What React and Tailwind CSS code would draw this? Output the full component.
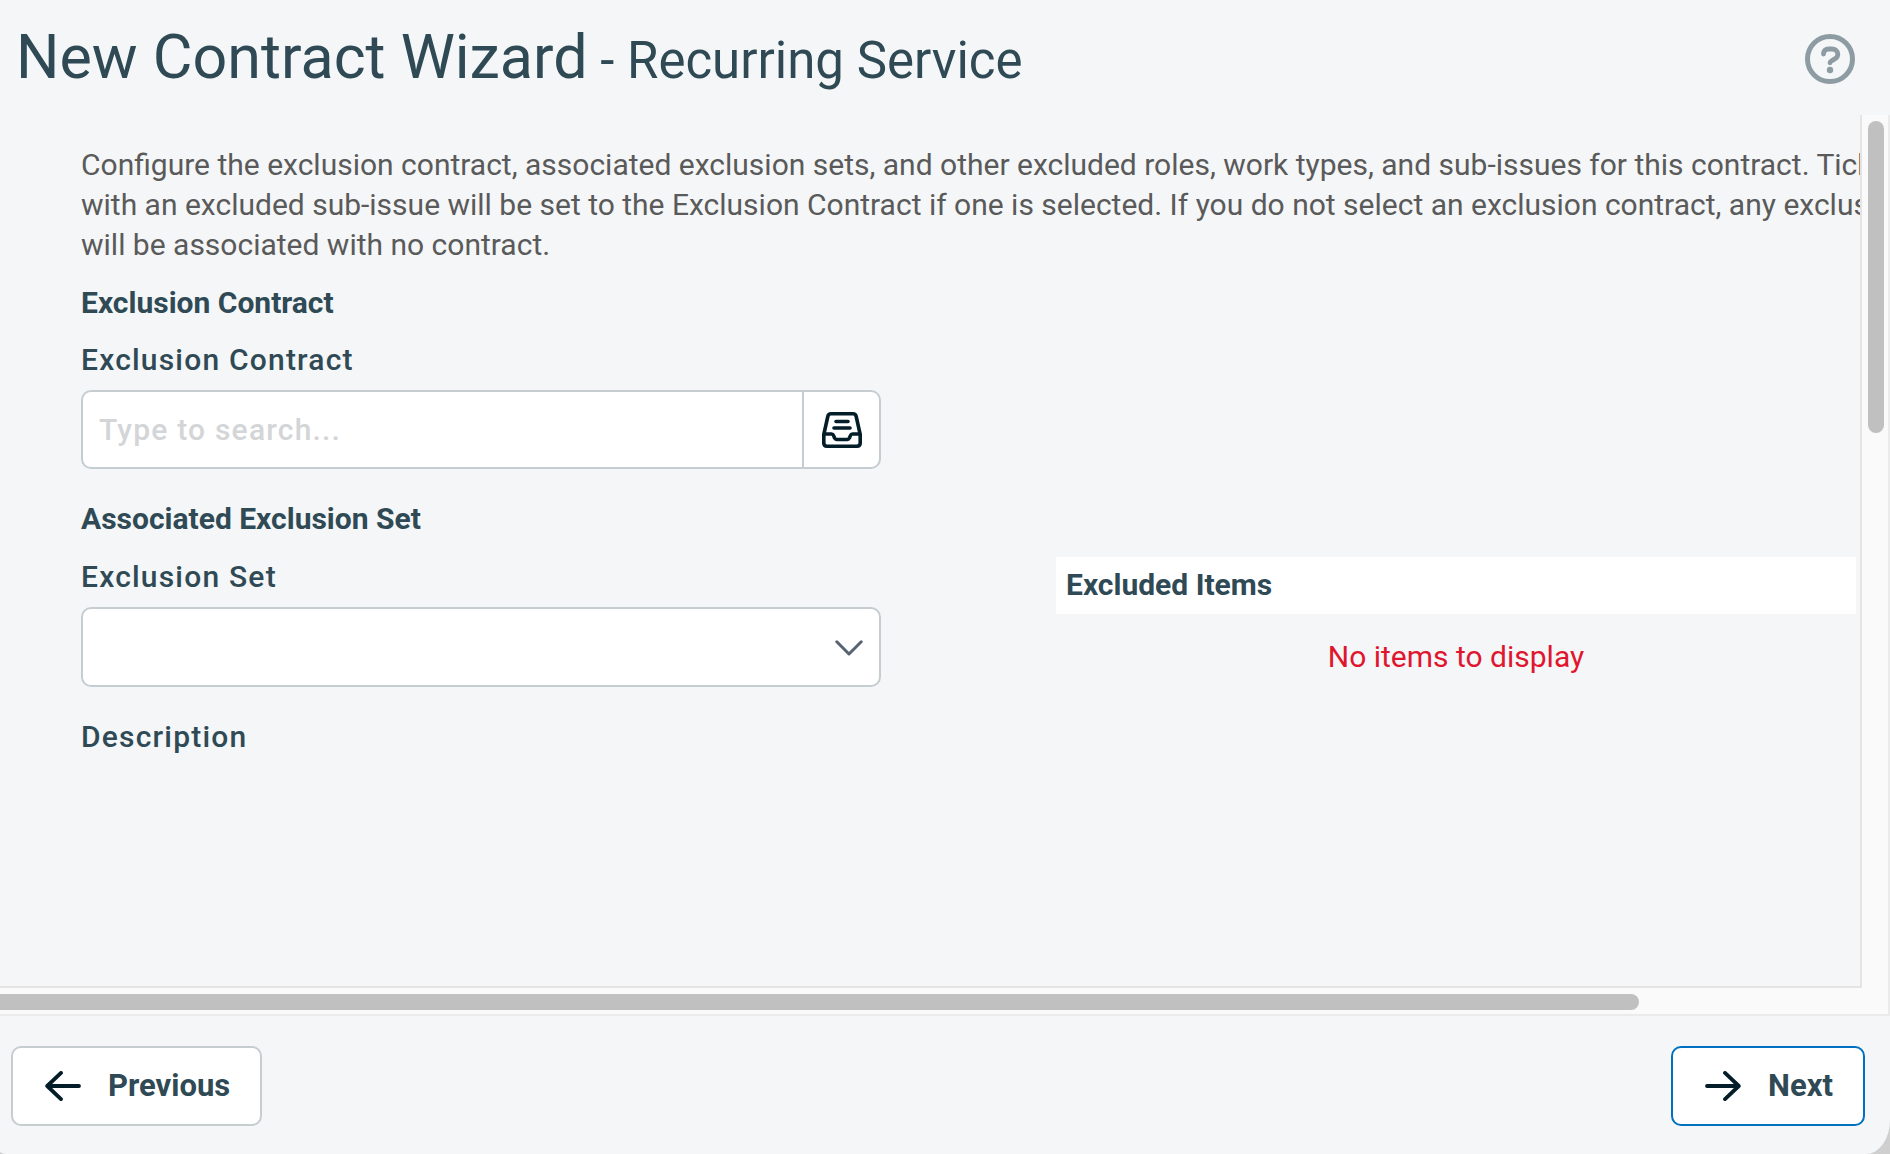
import { useState } from 'react'

function HelpIcon() {
  return (
    <svg width="50" height="50" viewBox="0 0 50 50" fill="none" stroke="currentColor" aria-hidden="true">
      <circle cx="25" cy="25" r="22.5" strokeWidth="5" />
      <path d="M18.500 20c0-3.200 2-5 5-5h3.500c3 0 5.800 1.900 5.800 5.200 0 2.300-1.200 3.700-3 4.700l-2.800 1.700c-1.400.800-2 1.600-2 2.200" strokeWidth="4.800" strokeLinecap="round" strokeLinejoin="round" />
      <circle cx="25" cy="36" r="3.200" fill="currentColor" stroke="none" />
    </svg>
  )
}

function InboxIcon() {
  return (
    <svg width="40" height="36" viewBox="0 0 40 36" fill="none" stroke="currentColor" strokeWidth="3.600" strokeLinecap="round" strokeLinejoin="round" aria-hidden="true">
      <path d="M1.800 22.500 5.800 4.500Q6.400 1.800 9 1.800h22q2.600 0 3.200 2.700l4 18V31q0 3.200-3.200 3.200H5Q1.800 34.200 1.800 31Z" />
      <path d="M2.500 22H9.500Q11 22 11.500 23.400L12.700 26.200Q13.200 27.500 14.700 27.500H25.300Q26.800 27.500 27.300 26.200L28.500 23.400Q29 22 30.500 22H37.500" />
      <path d="M14 9.500H26M12 16H28" />
    </svg>
  )
}

function ChevronIcon() {
  return (
    <svg width="28" height="16" viewBox="0 0 28 16" fill="none" stroke="currentColor" strokeWidth="3" strokeLinecap="round" strokeLinejoin="round" aria-hidden="true">
      <path d="M1.800 1.800 14 14 26.200 1.800" />
    </svg>
  )
}

function ArrowIcon({ className }) {
  return (
    <svg className={className} width="36" height="30" viewBox="0 0 36 30" fill="none" stroke="currentColor" strokeWidth="3.800" strokeLinecap="round" strokeLinejoin="round" aria-hidden="true">
      <path d="M16 1.900 2.200 15 16 28.100M2.200 15H34" />
    </svg>
  )
}

function SectionTitle({ children, className = '' }) {
  return <h2 className={`text-[30px] leading-[40px] font-bold ${className}`}>{children}</h2>
}

const LABEL = 'block text-[30px] leading-[40px] font-medium tracking-[0.04em]'
const BUTTON = 'flex h-20 items-center gap-[27px] rounded-[10px] border-2 bg-white pr-[30px] pl-8 text-[31px] leading-[40px] font-bold'

export default function App() {
  const [contract, setContract] = useState('')
  const [exclusionSet, setExclusionSet] = useState('')

  return (
    <div className="h-screen bg-[#cfcfcf] font-['Roboto',sans-serif] text-[#2f4a55]">
      <div className="flex h-full flex-col overflow-hidden rounded-br-[24px_34px] rounded-bl-[6px_3px] bg-[#f4f6f8]">
        <header className="flex h-[115px] shrink-0 items-center justify-between pt-[2px] pr-[35px] pl-4">
          <h1 className="text-[61px] leading-[72px]">
            New Contract Wizard<span className="text-[51px]"> - Recurring Service</span>
          </h1>
          <button type="button" aria-label="Help" className="text-[#8d9ca3]">
            <HelpIcon />
          </button>
        </header>

        {/* Scrolling area */}
        <div className="flex min-h-0 flex-1 flex-col">
          <div className="flex min-h-0 flex-1">
            <main className="min-w-0 flex-1 overflow-hidden border-r-2 border-b-2 border-[#e4e4e4] pt-[30px] pl-[81px]">
              <div className="w-max">
                <p className="text-[30px] leading-[40px] whitespace-nowrap text-[#5a5a5a]">
                  Configure the exclusion contract, associated exclusion sets, and other excluded roles, work types, and sub-issues for this contract. Tickets
                  <br />
                  with an excluded sub-issue will be set to the Exclusion Contract if one is selected. If you do not select an exclusion contract, any exclusions
                  <br />
                  will be associated with no contract.
                </p>

                <SectionTitle className="mt-[18px]">Exclusion Contract</SectionTitle>
                <div className="mt-[17px] w-[800px]">
                  <label htmlFor="contract" className={LABEL}>Exclusion Contract</label>
                  <div className="mt-[10px] flex h-[79px] overflow-hidden rounded-[10px] border-2 border-[#c5cdd1] bg-white">
                    <input
                      id="contract"
                      type="text"
                      placeholder="Type to search..."
                      value={contract}
                      onChange={e => setContract(e.target.value)}
                      className="min-w-0 flex-1 px-4 text-[30px] font-medium tracking-[0.04em] outline-none placeholder:text-[#d3d5d7]"
                    />
                    <button type="button" aria-label="Browse contracts" className="flex w-[77px] items-center justify-center border-l-2 border-[#c5cdd1] text-[#031d29]">
                      <InboxIcon />
                    </button>
                  </div>
                </div>

                <SectionTitle className="mt-[30px]">Associated Exclusion Set</SectionTitle>
                <div className="mt-[18px] flex gap-[175px]">
                  <div className="w-[800px]">
                    <label htmlFor="exclusion-set" className={LABEL}>Exclusion Set</label>
                    <div className="relative mt-[10px]">
                      <select
                        id="exclusion-set"
                        value={exclusionSet}
                        onChange={e => setExclusionSet(e.target.value)}
                        className="block h-20 w-full appearance-none rounded-[10px] border-2 border-[#c5cdd1] bg-white px-4 text-[30px] outline-none"
                      >
                        <option value=""></option>
                      </select>
                      <span className="pointer-events-none absolute inset-y-0 right-[18px] flex items-center pt-[2px] text-[#566370]">
                        <ChevronIcon />
                      </span>
                    </div>
                    <h3 className={`mt-[30px] ${LABEL}`}>Description</h3>
                  </div>

                  <section className="w-[800px]">
                    <SectionTitle className="bg-white px-[10px] pt-2 pb-[9px]">Excluded Items</SectionTitle>
                    <p className="mt-[23px] text-center text-[30px] leading-[40px] text-[#e0162f]">No items to display</p>
                  </section>
                </div>
              </div>
            </main>

            {/* Vertical track */}
            <div className="w-7 shrink-0 border-r-2 border-[#ebebeb] bg-[#fafafa] pt-[6px] pl-[6px]">
              <div className="h-[36%] w-4 rounded-full bg-[#c0c0c0]" />
            </div>
          </div>

          {/* Horizontal track */}
          <div className="h-7 shrink-0 border-r-2 border-b-2 border-[#ebebeb] bg-[#fafafa] pt-[6px] pr-[26px]">
            <div className="h-4 w-[88%] rounded-r-full bg-[#c0c0c0]" />
          </div>
        </div>

        <footer className="flex shrink-0 items-center justify-between pt-[30px] pr-[25px] pb-7 pl-[11px]">
          <button type="button" className={`${BUTTON} border-[#c5cdd1]`}>
            <ArrowIcon className="text-[#031d29]" />
            Previous
          </button>
          <button type="button" className={`${BUTTON} border-[#0070c0]`}>
            <ArrowIcon className="rotate-180 text-[#031d29]" />
            Next
          </button>
        </footer>
      </div>
    </div>
  )
}
